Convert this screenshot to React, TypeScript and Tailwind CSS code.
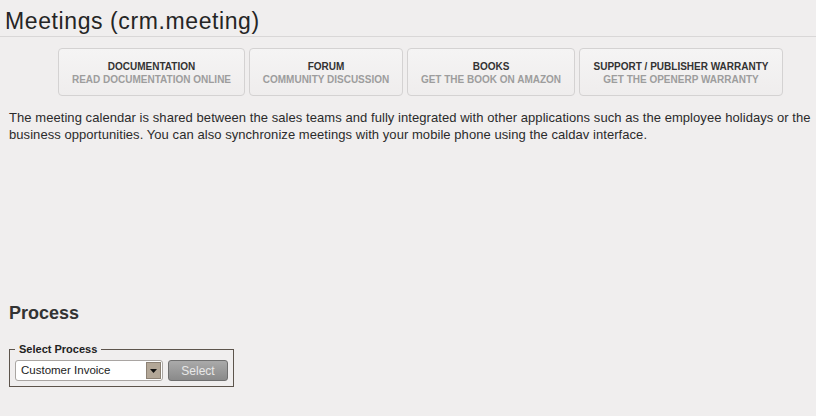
const links = [
  { title: "DOCUMENTATION", sub: "READ DOCUMENTATION ONLINE", w: "w-[187px]" },
  { title: "FORUM", sub: "COMMUNITY DISCUSSION", w: "w-[154px]" },
  { title: "BOOKS", sub: "GET THE BOOK ON AMAZON", w: "w-[168px]" },
  { title: "SUPPORT / PUBLISHER WARRANTY", sub: "GET THE OPENERP WARRANTY", w: "w-[204px]" },
];

export default function App() {
  return (
    <div className="h-[416px] w-[816px] overflow-hidden bg-[#f0eeee] font-['Liberation_Sans',Arial,sans-serif] text-[#333]">
      <div className="border-b border-[#d9d7d7] px-[5px] pt-[8px] pb-[1px]">
        <h1 className="text-[23px] leading-[27px] tracking-[0.6px] text-[#252525]">Meetings (crm.meeting)</h1>
      </div>

      <div className="flex gap-[4px] pt-[11px] pl-[58px]">
        {links.map((l) => (
          <a
            key={l.title}
            href="#"
            className={`${l.w} flex h-[48px] flex-col items-center justify-center rounded-[4px] border border-[#d4d2d2] bg-gradient-to-b from-[#f5f4f4] to-[#efeded] pt-[1px] text-center text-[10px] font-bold leading-[13px]`}
          >
            <span className="text-[#333]">{l.title}</span>
            <span className="text-[#9d9d9d]">{l.sub}</span>
          </a>
        ))}
      </div>

      <p className="pl-[9px] pr-[4px] pt-[13px] text-[13px] leading-[17px] tracking-[0.06px] text-[#2b2b2b]">
        The meeting calendar is shared between the sales teams and fully integrated with other applications such as the employee holidays or the
        business opportunities. You can also synchronize meetings with your mobile phone using the caldav interface.
      </p>

      <h2 className="px-[9px] pt-[159px] text-[18px] font-bold leading-[22px] text-[#333]">Process</h2>

      <fieldset className="mt-[19px] ml-[9px] w-[224px] border border-[#5d544c] px-[5px] pt-[4px] pb-[5px]">
        <legend className="px-[4px] text-[11px] font-bold leading-[13px] text-[#222]">Select Process</legend>
        <div className="flex items-center gap-[5px]">
          <div className="flex h-[21px] w-[148px] items-center rounded-[3px] border border-[#a9a5a2] bg-white pl-[5px] pr-[1px]">
            <span className="flex-1 text-[11.5px] text-[#222]">Customer Invoice</span>
            <span className="flex h-[17px] w-[15px] items-center justify-center border border-[#8c8174] bg-[#b3a797]">
              <svg width="7" height="4" viewBox="0 0 7 4">
                <path d="M0 0h7L3.5 4z" fill="#111" />
              </svg>
            </span>
          </div>
          <button className="h-[21px] w-[60px] rounded-[3px] border border-[#6f6f6f] bg-gradient-to-b from-[#aaaaaa] to-[#8a8a8a] text-[12px] text-[#e8e8e8]">
            Select
          </button>
        </div>
      </fieldset>
    </div>
  );
}
